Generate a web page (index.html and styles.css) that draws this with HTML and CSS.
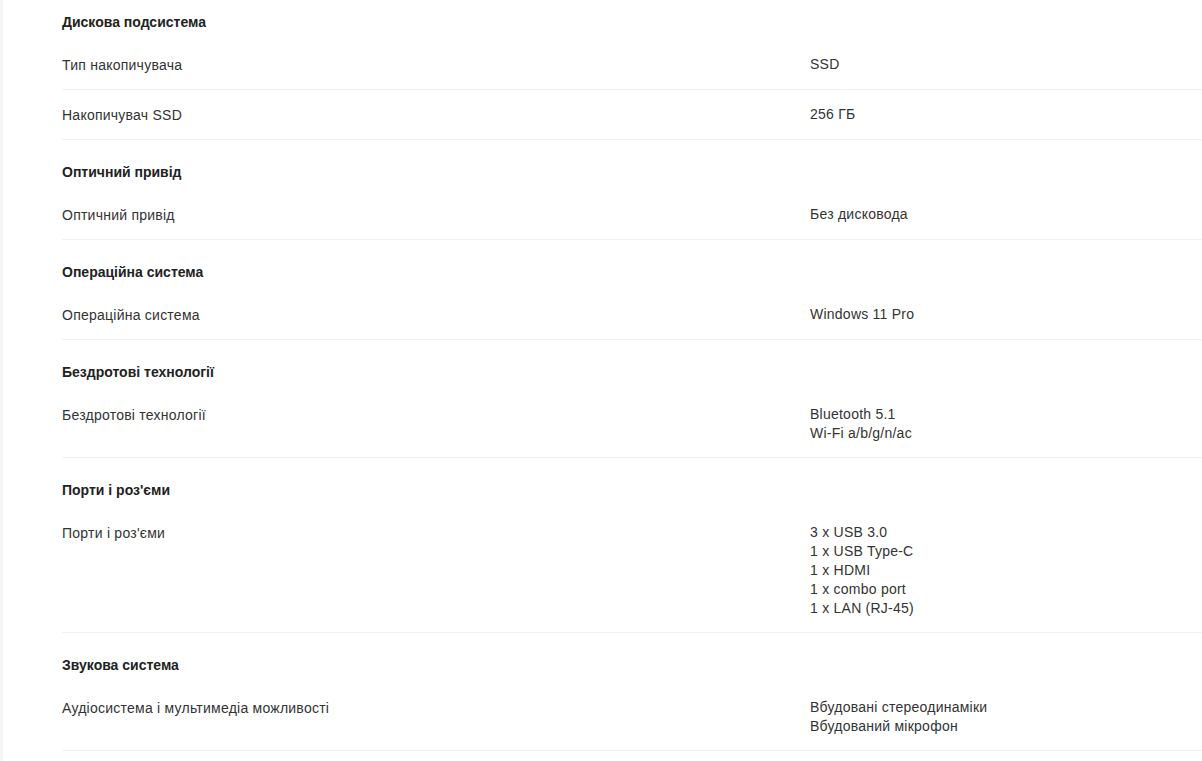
FILE: index.html
```html
<!DOCTYPE html>
<html lang="uk">
<head>
<meta charset="utf-8">
<title>Характеристики</title>
<link rel="stylesheet" href="styles.css">
</head>
<body>
<div class="page">
  <div class="specs">
    <div class="group">
      <h3 class="group-title">Дискова подсистема</h3>
      <div class="row"><div class="label">Тип накопичувача</div><div class="value">SSD</div></div>
      <div class="row"><div class="label">Накопичувач SSD</div><div class="value">256 ГБ</div></div>
    </div>
    <div class="group">
      <h3 class="group-title">Оптичний привід</h3>
      <div class="row"><div class="label">Оптичний привід</div><div class="value">Без дисковода</div></div>
    </div>
    <div class="group">
      <h3 class="group-title">Операційна система</h3>
      <div class="row"><div class="label">Операційна система</div><div class="value">Windows 11 Pro</div></div>
    </div>
    <div class="group">
      <h3 class="group-title">Бездротові технології</h3>
      <div class="row"><div class="label">Бездротові технології</div><div class="value"><div>Bluetooth 5.1</div><div>Wi-Fi a/b/g/n/ac</div></div></div>
    </div>
    <div class="group">
      <h3 class="group-title">Порти і роз'єми</h3>
      <div class="row"><div class="label">Порти і роз'єми</div><div class="value"><div>3 x USB 3.0</div><div>1 x USB Type-C</div><div>1 x HDMI</div><div>1 x combo port</div><div>1 x LAN (RJ-45)</div></div></div>
    </div>
    <div class="group">
      <h3 class="group-title">Звукова система</h3>
      <div class="row"><div class="label">Аудіосистема і мультимедіа можливості</div><div class="value"><div>Вбудовані стереодинаміки</div><div>Вбудований мікрофон</div></div></div>
    </div>
  </div>
</div>
</body>
</html>
```

FILE: styles.css
```css
html, body {
  margin: 0;
  padding: 0;
  background: #ffffff;
  overflow: hidden;
}

body {
  font-family: "Liberation Sans", Arial, sans-serif;
  font-size: 14px;
  line-height: 19px;
  color: #333333;
}

.page {
  display: flow-root;
  border-left: 3px solid #f5f5f5;
  padding-left: 59px;
  height: 761px;
  box-sizing: border-box;
}

.specs {
  margin-top: -10px;
}

.group-title {
  margin: 0;
  padding: 23px 0 8px;
  font-size: 14px;
  line-height: 19px;
  font-weight: bold;
  color: #222222;
}

.row {
  display: grid;
  grid-template-columns: 748px 1fr;
  padding: 15px 0 14px;
  border-bottom: 1px solid #f0f0f0;
}

.label,
.value {
  color: #333333;
  letter-spacing: 0.24px;
}

.label {
  line-height: 20px;
}

.value {
  line-height: 19px;
}
```
